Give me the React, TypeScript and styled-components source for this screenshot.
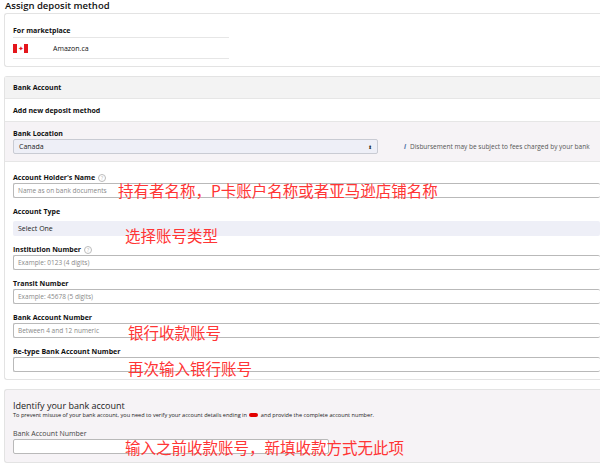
import * as React from "react";
import styled, { createGlobalStyle } from "styled-components";

const Global = createGlobalStyle`
  html, body { margin: 0; padding: 0; background: #fff; overflow: hidden; }
  body { font-family: "Open Sans", "Liberation Sans", sans-serif; color: #111; }
`;

const Page = styled.div`
  position: relative;
  width: 600px;
  height: 468px;
  padding: 0 0 0 4px;
  box-sizing: border-box;
  overflow: hidden;
`;

const Title = styled.div`
  font-size: 9.5px;
  font-weight: 600;
  height: 13px;
  line-height: 11px;
  padding-left: 1px;
`;

const Card = styled.div<{ $bg?: string }>`
  border: 1px solid #e3e3e3;
  border-right: none;
  border-radius: 3px 0 0 3px;
  background: ${p => p.$bg || "#fff"};
  margin-bottom: 9px;
  width: 596px;
  box-sizing: border-box;
`;

const Market = styled.div`
  padding: 10px 8px 7px;
`;

const SmallBold = styled.div`
  font-size: 7px;
  font-weight: 700;
  height: 13px;
  line-height: 13px;
  width: 216px;
  border-bottom: 1px solid #e6e6e6;
`;

const MarketRow = styled.div`
  display: flex;
  align-items: center;
  height: 20px;
  width: 216px;
  border-bottom: 1px solid #e6e6e6;
  font-size: 7px;
`;

const Flag = styled.div`
  display: flex;
  width: 15px;
  height: 9px;
  margin-right: 25px;
`;

const Bar = styled.div<{ $bg?: string; $h: number; $border?: boolean }>`
  height: ${p => p.$h}px;
  background: ${p => p.$bg || "#fff"};
  border-bottom: ${p => (p.$border ? "1px solid #e6e6e6" : "none")};
  display: flex;
  align-items: center;
  padding-left: 8px;
  font-size: 7px;
  font-weight: 700;
`;

const LocSection = styled.div`
  background: #f6f3f6;
  border-bottom: 1px solid #e6e6e6;
  padding: 6px 8px 7px;
  display: flex;
  align-items: flex-end;
  gap: 26px;
`;

const Field = styled.div`
  display: flex;
  flex-direction: column;
`;

const Label = styled.div<{ $light?: boolean }>`
  font-size: 7px;
  font-weight: ${p => (p.$light ? 400 : 700)};
  color: ${p => (p.$light ? "#444" : "#111")};
  height: 11px;
  line-height: 11px;
  display: flex;
  align-items: center;
  gap: 3px;
`;

const Help = styled.span`
  display: inline-block;
  width: 6px;
  height: 6px;
  border-radius: 50%;
  border: 1px solid #bbb;
  color: #bbb;
  font-size: 5px;
  line-height: 6px;
  text-align: center;
  font-weight: 400;
`;

const Select = styled.div<{ $w: string; $flat?: boolean }>`
  width: ${p => p.$w};
  height: 15px;
  box-sizing: border-box;
  background: #eeeff7;
  border: ${p => (p.$flat ? "none" : "1px solid #c9cbd3")};
  border-radius: 2px;
  display: flex;
  align-items: center;
  justify-content: space-between;
  padding: 0 5px;
  font-size: 7px;
  color: #222;
`;

const Note = styled.div`
  font-size: 6.5px;
  color: #555;
  padding-bottom: 3px;
  i { color: #4a6fa5; margin-right: 4px; font-weight: 700; }
`;

const Form = styled.div`
  padding: 10px 0 7px 8px;
  display: flex;
  flex-direction: column;
  gap: 8px;
`;

const Input = styled.div<{ $w?: string }>`
  width: ${p => p.$w || "100%"};
  height: 15px;
  box-sizing: border-box;
  border: 1px solid #b9b9b9;
  border-right: ${p => (p.$w ? "1px solid #b9b9b9" : "none")};
  border-radius: 2px;
  background: #fff;
  font-size: 6.5px;
  color: #888;
  display: flex;
  align-items: center;
  padding-left: 4px;
`;

const Identify = styled.div`
  padding: 10px 8px 8px;
`;

const IdTitle = styled.div`
  font-size: 9px;
  color: #222;
  line-height: 11px;
`;

const IdText = styled.div`
  font-size: 5.6px;
  color: #222;
  margin-bottom: 9px;
  span { display: inline-block; width: 9px; height: 4px; background: #e20000; border-radius: 3px; margin: 0 1px; }
`;

const Note2 = styled.div<{ $x: number; $y: number }>`
  position: absolute;
  left: ${p => p.$x}px;
  top: ${p => p.$y}px;
  font-family: "Noto Sans CJK SC", sans-serif;
  font-size: 15.5px;
  color: #ff3535;
  white-space: nowrap;
  line-height: 1;
`;

export default function App() {
  return (
    <Page>
      <Global />
      <Title>Assign deposit method</Title>
      <Card>
        <Market>
          <SmallBold>For marketplace</SmallBold>
          <MarketRow>
            <Flag>
              <div style={{ width: 4, background: "#e4161c" }} />
              <div style={{ flex: 1, background: "#fff", color: "#e4161c", fontSize: 7, lineHeight: "9px", textAlign: "center" }}>✦</div>
              <div style={{ width: 4, background: "#e4161c" }} />
            </Flag>
            Amazon.ca
          </MarketRow>
        </Market>
      </Card>
      <Card>
        <Bar $bg="#f3f3f3" $h={21} $border>Bank Account</Bar>
        <Bar $h={22} $border>Add new deposit method</Bar>
        <LocSection>
          <Field>
            <Label>Bank Location</Label>
            <Select $w="365px"><span>Canada</span><span style={{ fontSize: 5 }}>⬍</span></Select>
          </Field>
          <Note><i>i</i>Disbursement may be subject to fees charged by your bank</Note>
        </LocSection>
        <Form>
          <Field>
            <Label>Account Holder's Name <Help>?</Help></Label>
            <Input>Name as on bank documents</Input>
          </Field>
          <Field>
            <Label>Account Type</Label>
            <Select $w="100%" $flat style={{ marginTop: 4 }}>Select One</Select>
          </Field>
          <Field>
            <Label>Institution Number <Help>?</Help></Label>
            <Input>Example: 0123 (4 digits)</Input>
          </Field>
          <Field>
            <Label>Transit Number</Label>
            <Input>Example: 45678 (5 digits)</Input>
          </Field>
          <Field>
            <Label>Bank Account Number</Label>
            <Input>Between 4 and 12 numeric</Input>
          </Field>
          <Field>
            <Label>Re-type Bank Account Number</Label>
            <Input />
          </Field>
        </Form>
      </Card>
      <Card $bg="#f6f3f6">
        <Identify>
          <IdTitle>Identify your bank account</IdTitle>
          <IdText>To prevent misuse of your bank account, you need to verify your account details ending in <span /> and provide the complete account number.</IdText>
          <Label $light>Bank Account Number</Label>
          <Input $w="316px" />
        </Identify>
      </Card>
      <Note2 $x={118} $y={183}>持有者名称，P卡账户名称或者亚马逊店铺名称</Note2>
      <Note2 $x={125} $y={228}>选择账号类型</Note2>
      <Note2 $x={128} $y={325}>银行收款账号</Note2>
      <Note2 $x={128} $y={361}>再次输入银行账号</Note2>
      <Note2 $x={125} $y={440}>输入之前收款账号，新填收款方式无此项</Note2>
    </Page>
  );
}
